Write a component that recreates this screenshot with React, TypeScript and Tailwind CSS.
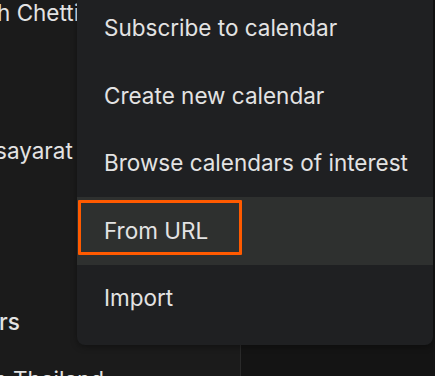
const items = [
  "Subscribe to calendar",
  "Create new calendar",
  "Browse calendars of interest",
  "From URL",
  "Import",
];

function Sidebar() {
  return (
    <div className="flex h-full w-[240px] flex-col overflow-hidden bg-[#1b1b1b] text-[22.5px] leading-[28px] text-[#e3e3e3]">
      <div className="mt-[-1px] -ml-[3px] whitespace-nowrap">h Chettiyar</div>
      <div className="mt-[110px] -ml-[5px] whitespace-nowrap">sayarat</div>
      <div className="mt-[143px] -ml-[1px] whitespace-nowrap font-medium">rs</div>
      <div className="mt-[30px] -ml-[12px] whitespace-nowrap">in Thailand</div>
    </div>
  );
}

function Menu() {
  return (
    <div className="absolute left-[77px] right-[2px] top-[-5.5px] rounded-b-[8px] bg-[#1f2022] pb-[13px] shadow-[0_2px_6px_rgba(0,0,0,0.35)]">
      {items.map((label) => {
        const active = label === "From URL";
        return (
          <div
            key={label}
            className={
              "relative flex h-[67.5px] items-center pl-[27px] text-[22.5px] text-[#e3e3e3] " +
              (active ? "bg-[#2e302f]" : "")
            }
          >
            {active && (
              <div className="absolute left-[1px] top-[3px] h-[55px] w-[164px] rounded-[1px] border-[3px] border-[#ff5a00]" />
            )}
            <span className="relative">{label}</span>
          </div>
        );
      })}
    </div>
  );
}

export default function App() {
  return (
    <div
      className="relative flex h-[376px] w-[435px] overflow-hidden bg-[#141414]"
      style={{ fontFamily: "Inter, 'Liberation Sans', sans-serif" }}
    >
      <Sidebar />
      <div className="flex-1 border-l border-[#2a2a2a] bg-[#141414]" />
      <Menu />
    </div>
  );
}
